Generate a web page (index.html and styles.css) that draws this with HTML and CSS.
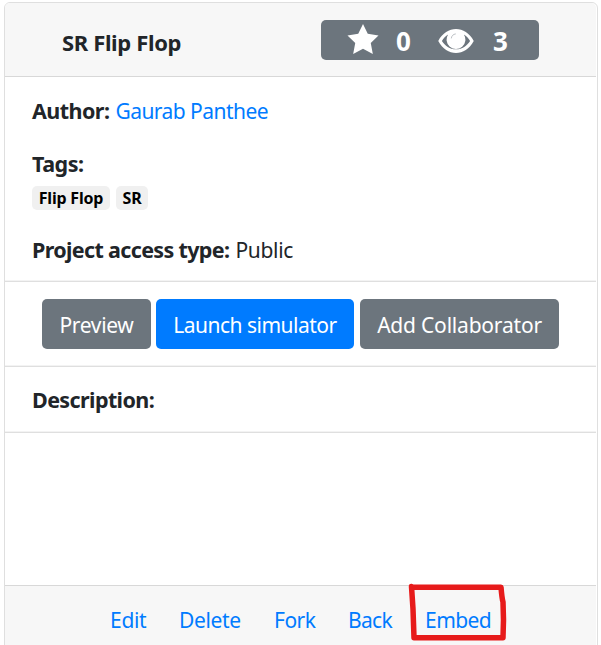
FILE: index.html
```html
<!DOCTYPE html>
<html lang="en">
<head>
<meta charset="utf-8">
<title>SR Flip Flop</title>
<link rel="stylesheet" href="styles.css">
</head>
<body>
<main class="card">
  <header class="card-header">
    <h1 class="title">SR Flip Flop</h1>
    <div class="stats">
      <svg class="star" viewBox="0 0 30 29"><path d="M15 0l4.600 9.500 10.400 1.500-7.500 7.400 2 10.600L15 24l-9.500 5 2-10.600L0 11l10.400-1.500z"/></svg>
      <span class="count stars-count">0</span>
      <svg class="eye" viewBox="0 0 34 23"><path fill-rule="evenodd" d="M0 11.500C8-3.700 26-3.700 34 11.500 26 26.700 8 26.700 0 11.500zM3.500 11.500c3 4.500 7.500 8 13.500 8s10.500-3.500 13.500-8c-1.500-2.600-3.500-4.700-6-6.200a9 9 0 1 1-15 0C7 6.800 5 8.900 3.500 11.500z"/><path class="glint" d="M12.500 9c.3-2.500 1.800-4 4.300-4.300"/></svg>
      <span class="count">3</span>
    </div>
  </header>
  <section class="details">
    <p class="line author"><b class="l-author">Author:</b><a class="v-author" href="#">Gaurab Panthee</a></p>
    <p class="line tags-label"><b class="l-tags">Tags:</b></p>
    <div class="tags"><span class="tag tag-flip">Flip Flop</span><span class="tag">SR</span></div>
    <p class="line"><b class="l-access">Project access type:</b><span class="v-access">Public</span></p>
  </section>
  <section class="actions">
    <button class="btn preview">Preview</button>
    <button class="btn launch">Launch simulator</button>
    <button class="btn collab">Add Collaborator</button>
  </section>
  <section class="description"><p class="line"><b class="l-desc">Description:</b></p></section>
  <section class="blank"></section>
  <footer class="card-footer">
    <a class="f-edit" href="#">Edit</a>
    <a class="f-delete" href="#">Delete</a>
    <a class="f-fork" href="#">Fork</a>
    <a class="f-back" href="#">Back</a>
    <a class="f-embed" href="#">Embed<svg class="mark" viewBox="0 0 98 60"><path d="M3.500 3.500L5 26 6 54.700H95Q96 37 95 19 94 16 93 4.300H4"/></svg></a>
  </footer>
</main>
</body>
</html>
```
FILE: styles.css
```css
* { box-sizing: border-box; }
body {
  margin: 0;
  height: 645px;
  overflow: hidden;
  background: #fff;
  color: #212529;
  font: 400 21px/34px "Noto Sans", "Open Sans", sans-serif;
}
h1, p { margin: 0; }
a { color: #007bff; text-decoration: none; }
b { font-weight: 700; font-size: 21.5px; }

.card {
  width: 594px;
  height: 660px;
  margin: 2px 0 0 4px;
  padding-right: 1px;
  border: 1px solid #dfdfdf;
  border-radius: 6px;
}
.card-header {
  display: flex;
  height: 74px;
  padding: 17px 57px 0;
  justify-content: space-between;
  background: #f7f7f7;
  border-bottom: 1px solid #d8d8d8;
  border-radius: 5px 5px 0 0;
}
.title { font-size: 22px; line-height: 44px; white-space: nowrap; letter-spacing: -0.36px; }
.stats {
  display: flex;
  width: 218px;
  height: 40px;
  padding-left: 26px;
  align-items: center;
  background: #6c757d;
  border-radius: 5px;
  color: #fff;
  font-size: 26px;
  font-weight: 700;
}
.stats svg { fill: #fff; flex: none; }
.star { width: 32px; height: 30px; margin-top: -3px; }
.count { margin: 1px 0 0 19px; line-height: 36px; }
.stars-count { margin-left: 17px; width: 42px; }
.eye { width: 36px; height: 24px; margin-top: 1px; }
.glint { fill: none; stroke: #aeb3b8; stroke-width: 0.8; }

.details { height: 205px; padding: 17px 27px 0; }
.details, .actions, .description {
  border-bottom: 1px solid #dfdfdf;
  box-shadow: inset 0 -1px #f3f3f3;
}
.line { display: flex; height: 34px; white-space: nowrap; gap: 6px; }
.tags-label { margin-top: 19px; }
.l-author { letter-spacing: -0.55px; }
.v-author { letter-spacing: -0.54px; }
.l-tags { letter-spacing: -0.5px; }
.l-access { letter-spacing: -0.65px; }
.v-access { letter-spacing: -0.3px; }
.l-desc { letter-spacing: -0.6px; }
.tags { display: flex; gap: 6px; margin: 5px 0 23px; }
.tag {
  width: 32px;
  height: 24px;
  border-radius: 5px;
  background: #f0f0f0;
  color: #000;
  font-size: 16px;
  line-height: 25px;
  font-weight: 700;
  text-align: center;
  white-space: nowrap;
  letter-spacing: -0.2px;
}
.tag-flip { width: 78px; }

.actions { display: flex; height: 85px; padding: 17px 0 0 37px; }
.btn {
  height: 50px;
  padding: 1px 0 0;
  border: 0;
  border-radius: 5px;
  background: #6c757d;
  color: #fff;
  font: inherit;
  white-space: nowrap;
}
.preview { width: 109px; margin-right: 5px; letter-spacing: -0.35px; }
.launch { width: 198px; margin-right: 6px; background: #007bff; letter-spacing: -0.5px; }
.collab { width: 199px; letter-spacing: -0.2px; }

.description { height: 66px; padding: 16px 27px 0; }
.blank { height: 152px; }
.card-footer {
  display: flex;
  height: 70px;
  padding: 17px 0 0 105px;
  background: #f7f7f7;
  border-top: 1px solid #d8d8d8;
}
.card-footer a { white-space: nowrap; }
.f-edit { width: 69px; letter-spacing: -0.3px; }
.f-delete { width: 95px; letter-spacing: -0.35px; }
.f-fork { width: 74px; letter-spacing: -0.5px; }
.f-back { width: 77px; letter-spacing: -0.7px; }
.f-embed { position: relative; width: 70px; letter-spacing: -0.55px; }
.mark { position: absolute; left: -17px; top: -20px; width: 98px; height: 60px; overflow: visible; fill: none; stroke: #e71b1b; stroke-width: 5.500; stroke-linejoin: round; stroke-linecap: round; }
```
